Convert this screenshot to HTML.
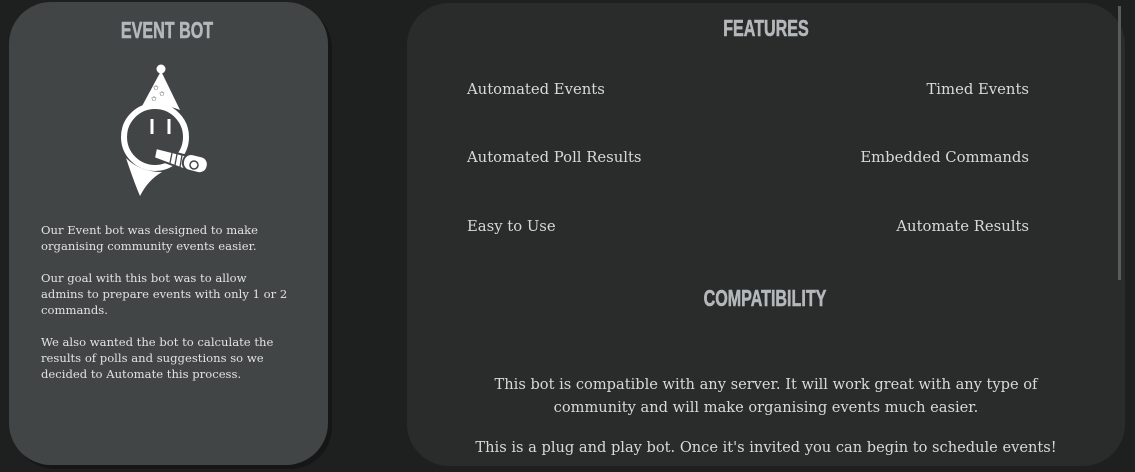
<!DOCTYPE html>
<html><head><meta charset="utf-8"><style>
html,body{margin:0;padding:0;width:1135px;height:472px;overflow:hidden;background:#1e1f1f;}
.card1{position:absolute;left:9px;top:2px;width:319px;height:463px;background:#424546;border-radius:42px;box-shadow:4px 4px 0 #151616;}
.card2{position:absolute;left:407px;top:3px;width:718px;height:463px;background:#2a2b2b;border-radius:42px;}
.sb{position:absolute;left:1118px;top:6px;width:3px;height:274px;background:#5a5c5c;}
.h{position:absolute;font-family:"Liberation Sans",sans-serif;font-weight:bold;color:#b3b8bb;font-size:23px;line-height:24px;white-space:nowrap;transform:scaleX(0.7);transform-origin:center top;text-align:center;width:300px;-webkit-text-stroke:0.6px #b3b8bb;}
.t{position:absolute;font-family:"DejaVu Serif","Liberation Serif",serif;color:#d9d9d9;white-space:nowrap;}
.f{font-size:14.8px;line-height:18px;}
.l{font-size:11.6px;line-height:16px;left:41px;color:#e2e2e2;}
.c{font-size:14.6px;line-height:23px;left:407px;width:718px;text-align:center;}
</style></head><body>
<div class="card1"></div>
<div class="card2"></div>
<div class="sb"></div>
<div class="h" style="left:17px;top:18px;">EVENT BOT</div>
<svg style="position:absolute;left:100px;top:60px" width="120" height="140" viewBox="100 60 120 140">
 <circle cx="155" cy="137" r="31" fill="none" stroke="#fff" stroke-width="6"/>
 <path d="M126 158 Q134 182 140 196 Q148 180 162 172 Q140 172 126 158 Z" fill="#fff"/>
 <path d="M141 108 L161 71 L180 110 Q160 102 141 108 Z" fill="#fff"/>
 <circle cx="161" cy="69" r="4.5" fill="#fff"/>
 <g fill="#424546" font-size="7" font-family="DejaVu Sans">
  <text x="153" y="90">✩</text><text x="159" y="96">✩</text><text x="151" y="101">✩</text>
 </g>
 <line x1="152" y1="119" x2="152" y2="134" stroke="#fff" stroke-width="3"/>
 <line x1="169" y1="119" x2="169" y2="134" stroke="#fff" stroke-width="3"/>
 <path d="M156 148 L188 156 L186 170 L154 158 Z" fill="#fff" stroke="#424546" stroke-width="2"/>
 <rect x="183" y="155" width="25" height="17" rx="8" fill="#fff" stroke="#424546" stroke-width="2" transform="rotate(14 195 163)"/>
 <circle cx="194" cy="165" r="4" fill="none" stroke="#424546" stroke-width="1.5"/>
 <g stroke="#424546" stroke-width="1.3"><line x1="172" y1="153" x2="170" y2="163"/><line x1="177" y1="154" x2="175" y2="165"/><line x1="182" y1="155" x2="180" y2="167"/></g>
</svg>
<div class="t l" style="top:222px;">Our Event bot was designed to make<br>organising community events easier.</div>
<div class="t l" style="top:270px;">Our goal with this bot was to allow<br>admins to prepare events with only 1 or 2<br>commands.</div>
<div class="t l" style="top:334px;">We also wanted the bot to calculate the<br>results of polls and suggestions so we<br>decided to Automate this process.</div>
<div class="h" style="left:616px;top:16px;">FEATURES</div>
<div class="t f" style="left:467px;top:81px;">Automated Events</div>
<div class="t f" style="right:106px;top:81px;">Timed Events</div>
<div class="t f" style="left:467px;top:149px;">Automated Poll Results</div>
<div class="t f" style="right:106px;top:149px;">Embedded Commands</div>
<div class="t f" style="left:467px;top:218px;">Easy to Use</div>
<div class="t f" style="right:106px;top:218px;">Automate Results</div>
<div class="h" style="left:615px;top:286px;">COMPATIBILITY</div>
<div class="t c" style="top:373px;">This bot is compatible with any server. It will work great with any type of<br>community and will make organising events much easier.</div>
<div class="t c" style="top:436px;">This is a plug and play bot. Once it's invited you can begin to schedule events!</div>
</body></html>
